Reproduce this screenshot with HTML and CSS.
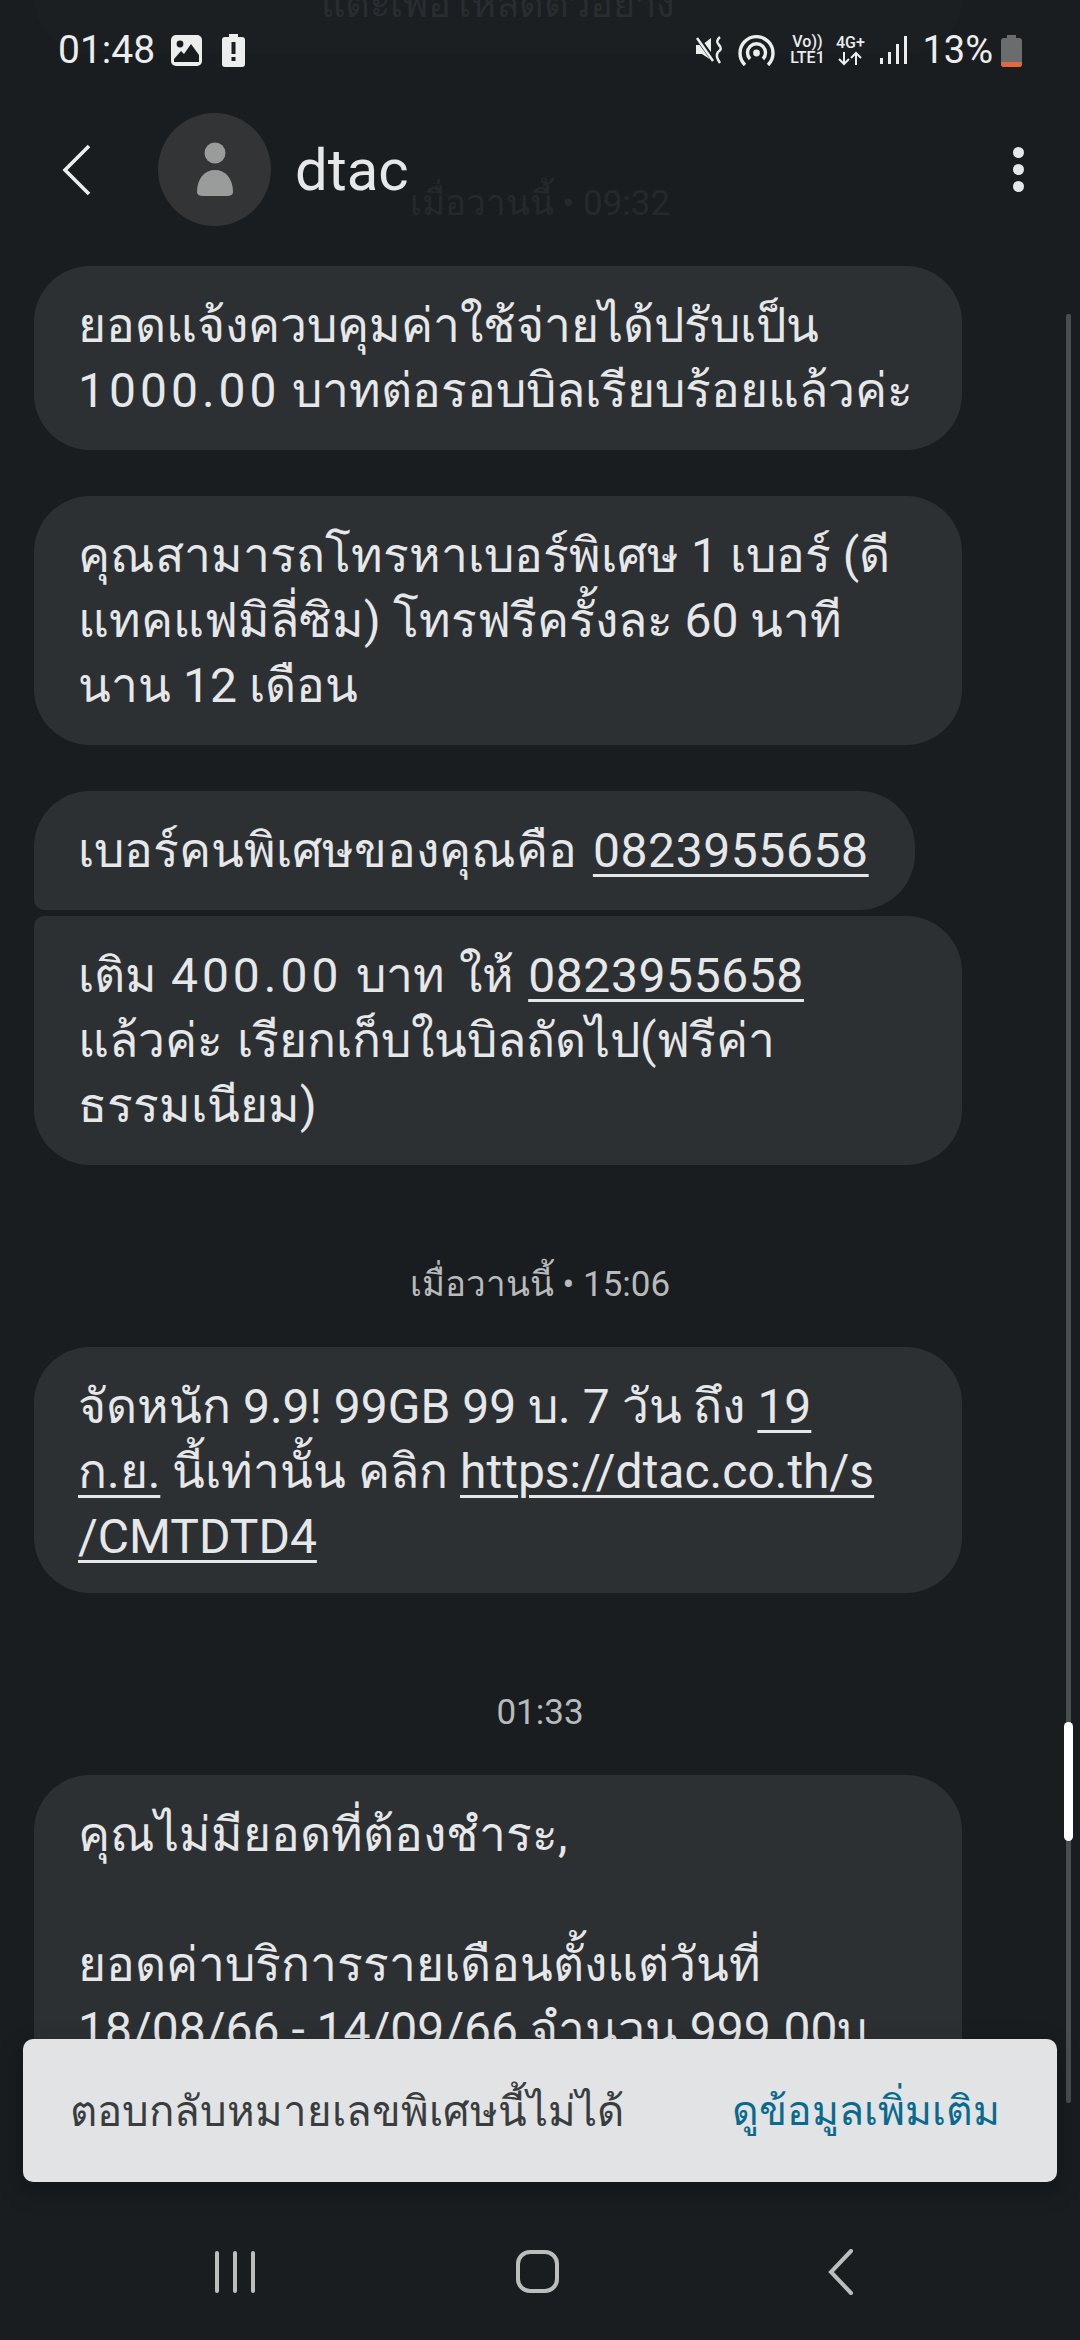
FILE: index.html
```html
<!DOCTYPE html>
<html>

<head>
    <meta charset="UTF-8">
    <title>dtac</title>
    <link rel="stylesheet" href="styles.css">
</head>

<body>
    <div class="screen">
        <div class="thread">
            <div class="bubble bubble-faded"><p class="faded-text">แตะเพื่อโหลดตัวอย่าง</p></div>
            <p class="stamp stamp-faded">เมื่อวานนี้ • 09:32</p>

            <div class="bubble bubble-full">ยอดแจ้งควบคุมค่าใช้จ่ายได้ปรับเป็น<br><span class="zeros">1000.00</span> บาทต่อรอบบิลเรียบร้อยแล้วค่ะ</div>
            <div class="bubble bubble-full spaced">คุณสามารถโทรหาเบอร์พิเศษ 1 เบอร์ (ดี<br>แทคแฟมิลี่ซิม) โทรฟรีครั้งละ 60 นาที<br>นาน 12 เดือน</div>
            <div class="bubble bubble-top spaced">เบอร์คนพิเศษของคุณคือ <u class="phone">0823955658</u></div>
            <div class="bubble bubble-full bubble-next">เติม <span class="zeros">400.00</span> บาท ให้ <u class="phone">0823955658</u><br>แล้วค่ะ เรียกเก็บในบิลถัดไป(ฟรีค่า<br>ธรรมเนียม)</div>

            <p class="stamp">เมื่อวานนี้ • 15:06</p>
            <div class="bubble bubble-full bubble-promo">จัดหนัก 9.9! 99GB 99 บ. 7 วัน ถึง <u>19</u><br><u>ก.ย.</u> นี้เท่านั้น คลิก <u>https://dtac.co.th/s</u><br><u>/CMTDTD4</u></div>

            <p class="stamp">01:33</p>
            <div class="bubble bubble-full">คุณไม่มียอดที่ต้องชำระ,<br><br>ยอดค่าบริการรายเดือนตั้งแต่วันที่<br>18/08/66 - 14/09/66 จำนวน 999.00บ<br>าท</div>
        </div>

        <div class="statusbar">
            <div class="status-left">
                <span class="clock">01:48</span>
                <svg class="ic-gallery" width="31" height="31" viewBox="0 0 31 31">
                    <rect width="31" height="31" rx="5" fill="#eceded"/>
                    <circle cx="9" cy="9" r="3.4" fill="#191d20"/>
                    <path d="M3 24 L10 16 L13 19 L20 9 L28 20 V27 H3 Z" fill="#191d20"/>
                </svg>
                <svg class="ic-alert" width="23" height="33" viewBox="0 0 23 33">
                    <path d="M7 0 H16 V3 H20 Q23 3 23 6 V30 Q23 33 20 33 H3 Q0 33 0 30 V6 Q0 3 3 3 H7 Z" fill="#eceded"/>
                    <rect x="9.5" y="8" width="4" height="12" fill="#191d20"/>
                    <rect x="9.5" y="23" width="4" height="4" fill="#191d20"/>
                </svg>
            </div>
            <div class="status-right">
                <svg width="30" height="28" viewBox="0 0 30 28">
                    <path d="M0 9 H6 L15 2 V24 L6 18 H0 Z" fill="#eceded"/>
                    <path d="M1 1 L19 26" stroke="#191d20" stroke-width="5"/>
                    <path d="M1 2 L17 25" stroke="#eceded" stroke-width="2.5"/>
                    <path d="M24 1 Q19 5 23 9 Q27 13 22 16 Q19 20 24 27" fill="none" stroke="#eceded" stroke-width="2.5"/>
                </svg>
                <svg class="ic-hotspot" width="37" height="31" viewBox="0 0 37 31">
                    <path d="M7 30 A16.5 16.5 0 1 1 30 30" fill="none" stroke="#eceded" stroke-width="3.4"/>
                    <path d="M12 24 A9 9 0 1 1 25 24" fill="none" stroke="#eceded" stroke-width="3.4"/>
                    <circle cx="18.5" cy="18" r="3.4" fill="#eceded"/>
                </svg>
                <span class="net net-volte"><b>Vo))</b><b>LTE1</b></span>
                <span class="net net-4g">
                    <b>4G+</b>
                    <svg width="24" height="15" viewBox="0 0 24 15">
                        <path d="M6 1 V13 M1 8 L6 13 L11 8 M18 14 V2 M13 7 L18 2 L23 7" fill="none" stroke="#eceded" stroke-width="2"/>
                    </svg>
                </span>
                <span class="signal"><i class="bar-1"></i><i class="bar-2"></i><i class="bar-3"></i><i class="bar-4"></i></span>
                <span class="percent">13%</span>
                <span class="battery"><i></i></span>
            </div>
        </div>

        <div class="appbar">
            <svg class="ic-back" width="30" height="52" viewBox="0 0 30 52">
                <path d="M27 2 L3 26 L27 50" fill="none" stroke="#eceded" stroke-width="3.6"/>
            </svg>
            <div class="avatar">
                <svg width="40" height="56" viewBox="0 0 40 56">
                    <circle cx="20" cy="11" r="10.5" fill="#9a9b9b"/>
                    <path d="M20 28 C30 28 38 36 38 50 Q38 54 32 54 H8 Q2 54 2 50 C2 36 10 28 20 28 Z" fill="#9a9b9b"/>
                </svg>
            </div>
            <span class="title">dtac</span>
            <div class="more"><i></i><i></i><i></i></div>
        </div>

        <div class="scroll-track"></div>
        <div class="scroll-thumb"></div>

        <div class="snackbar">
            <span>ตอบกลับหมายเลขพิเศษนี้ไม่ได้</span>
            <a class="snack-link">ดูข้อมูลเพิ่มเติม</a>
        </div>

        <div class="navbar">
            <div class="nav-recent"><i></i><i></i><i></i></div>
            <div class="nav-home"></div>
            <svg class="nav-back" width="26" height="46" viewBox="0 0 26 46">
                <path d="M23 2 L3 23 L23 44" fill="none" stroke="#bcbdbd" stroke-width="4" stroke-linecap="round"/>
            </svg>
        </div>
    </div>
</body>

</html>
```

FILE: styles.css
```css
* {
    margin: 0;
    padding: 0;
    box-sizing: border-box;
}

body {
    background: #191d20;
    font-family: Roboto, "Noto Sans", "DejaVu Sans", sans-serif;
}

.screen {
    position: relative;
    display: flex;
    flex-direction: column;
    width: 1080px;
    height: 2340px;
    overflow: hidden;
    background: #191d20;
}

.thread {
    height: 2130px;
    overflow: hidden;
    padding: 0 34px;
    flex: none;
}

.bubble {
    padding: 27px 44px;
    background: #2d3033;
    border-radius: 56px;
    color: #e6e7e8;
    font-size: 48px;
    line-height: 65px;
    white-space: nowrap;
}

.bubble-full {
    width: 928px;
}

.bubble-top {
    width: 881px;
    border-bottom-left-radius: 10px;
    word-spacing: 4px;
}

.bubble-next {
    margin-top: 6px;
    border-top-left-radius: 10px;
    word-spacing: 2px;
}

.bubble-promo {
    padding-bottom: 24px;
}

.spaced {
    margin-top: 46px;
}

.zeros {
    letter-spacing: 4px;
}

.bubble-faded {
    width: 928px;
    height: 82px;
    padding: 0;
    background: #1b1f22;
    border-radius: 0 0 56px 56px;
    text-align: center;
}

.faded-text {
    margin-top: -28px;
    color: #2a2d30;
    font-size: 38px;
}

.stamp {
    margin-top: 95px;
    margin-bottom: 37px;
    color: #b9babb;
    font-size: 35px;
    line-height: 50px;
    text-align: center;
}

.stamp-faded {
    margin-top: 125px;
    color: #26292c;
}

u {
    text-underline-offset: 7px;
    text-decoration-thickness: 3px;
}

.phone {
    letter-spacing: 0.6px;
}

.statusbar {
    position: absolute;
    top: 31px;
    left: 58px;
    right: 58px;
    display: flex;
    justify-content: space-between;
    align-items: center;
    height: 38px;
    color: #eceded;
}

.status-left,
.status-right {
    display: flex;
    align-items: center;
}

.clock {
    font-size: 39px;
    margin-right: 16px;
}

.ic-gallery {
    margin-right: 20px;
}

.ic-hotspot {
    margin-left: 12px;
}

.net {
    display: flex;
    flex-direction: column;
    align-items: center;
    width: 33px;
    font-size: 16px;
    line-height: 16px;
}

.net-volte {
    margin-left: 16px;
}

.net-4g {
    margin-left: 10px;
}

.net b {
    font-weight: 500;
    white-space: nowrap;
}

.signal {
    display: flex;
    align-items: flex-end;
    gap: 4.5px;
    height: 28px;
    margin-left: 13px;
}

.signal i {
    width: 3.5px;
    background: #eceded;
}

.bar-1 {
    height: 6px;
}

.bar-2 {
    height: 12px;
}

.bar-3 {
    height: 20px;
}

.bar-4 {
    height: 28px;
}

.percent {
    font-size: 38px;
    margin-left: 15px;
    margin-right: 8px;
}

.battery {
    position: relative;
    display: block;
    width: 21px;
    height: 29px;
    margin-top: 5px;
    border-radius: 3px;
    background: #6b6c6e;
}

.battery::before {
    content: "";
    position: absolute;
    top: -3px;
    left: 6px;
    width: 9px;
    height: 3px;
    background: #6b6c6e;
}

.battery i {
    position: absolute;
    left: 0;
    right: 0;
    bottom: 0;
    height: 5px;
    border-radius: 0 0 3px 3px;
    background: #e5673e;
}

.appbar {
    position: absolute;
    top: 113px;
    left: 0;
    right: 0;
    display: flex;
    align-items: center;
    height: 113px;
}

.ic-back {
    margin-left: 62px;
    margin-right: 66px;
}

.avatar {
    display: flex;
    align-items: center;
    justify-content: center;
    width: 113px;
    height: 113px;
    border-radius: 50%;
    background: #333435;
}

.title {
    margin-left: 24px;
    color: #e6e7e8;
    font-size: 58px;
}

.more {
    display: flex;
    flex-direction: column;
    gap: 6px;
    margin-left: auto;
    margin-right: 56px;
}

.more i {
    width: 11px;
    height: 11px;
    border-radius: 50%;
    background: #e6e7e8;
}

.scroll-track {
    position: absolute;
    top: 314px;
    left: 1066px;
    width: 5px;
    height: 1789px;
    border-radius: 2px;
    background: #4a4d4e;
}

.scroll-thumb {
    position: absolute;
    top: 1722px;
    left: 1064px;
    width: 9px;
    height: 119px;
    border-radius: 5px;
    background: #fff;
}

.snackbar {
    position: absolute;
    top: 2039px;
    left: 23px;
    display: flex;
    justify-content: space-between;
    align-items: center;
    width: 1034px;
    height: 143px;
    padding: 0 57px 0 47px;
    border-radius: 10px;
    background: #e1e3e5;
    box-shadow: 0 8px 24px rgba(0, 0, 0, 0.3);
    color: #3a3d40;
    font-size: 42px;
}

.snack-link {
    color: #0a6a8e;
    font-size: 41px;
}

.navbar {
    display: flex;
    align-items: center;
    height: 210px;
    padding: 73px 0 0 215px;
    flex: none;
}

.nav-recent {
    display: flex;
    gap: 14px;
}

.nav-recent i {
    width: 4px;
    height: 42px;
    border-radius: 2px;
    background: #bcbdbd;
}

.nav-home {
    width: 43px;
    height: 43px;
    margin-left: 261px;
    border: 4px solid #bcbdbd;
    border-radius: 14px;
}

.nav-back {
    margin-left: 269px;
}
```
